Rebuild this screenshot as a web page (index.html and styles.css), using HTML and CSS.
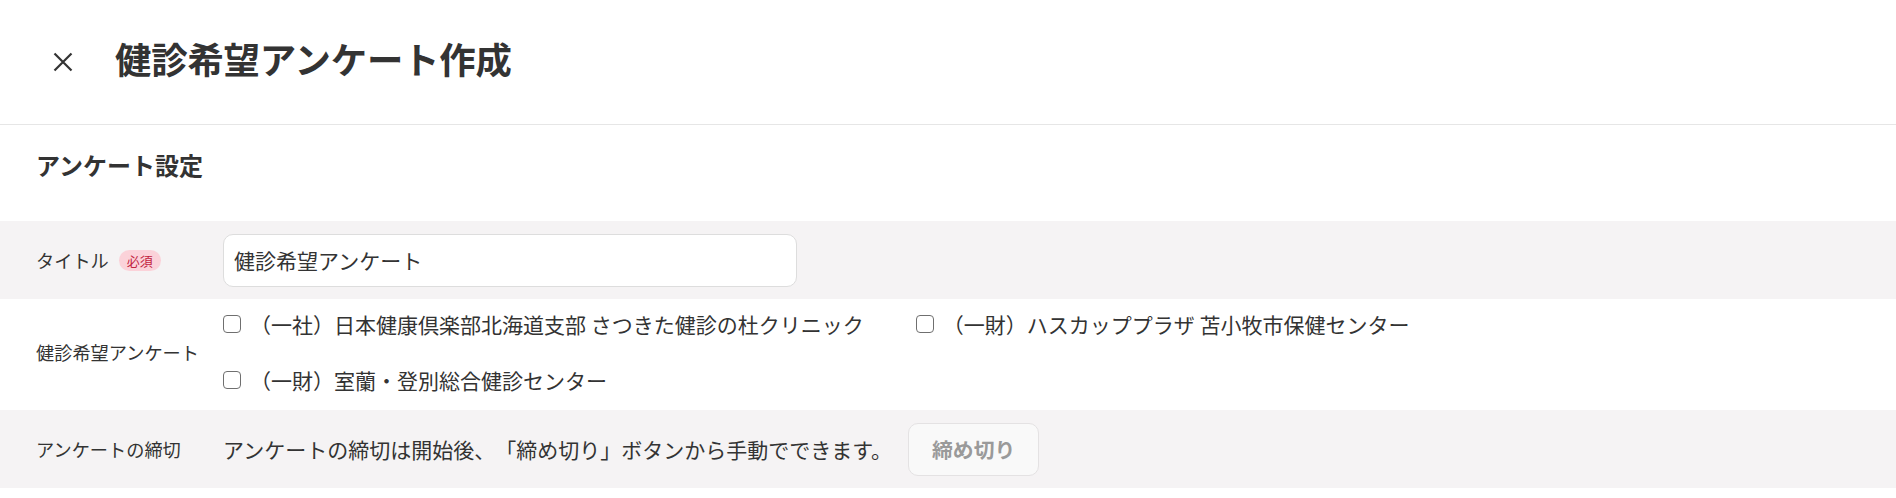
FILE: index.html
```html
<!DOCTYPE html>
<html lang="ja">
<head>
<meta charset="utf-8">
<title>健診希望アンケート作成</title>
<link rel="stylesheet" href="styles.css">
</head>
<body>
<header class="page-header">
  <button class="close-btn" type="button" aria-label="閉じる">
    <svg viewBox="0 0 20 20" width="20" height="20" aria-hidden="true">
      <path d="M1.5 1.5 L18.5 18.5 M18.5 1.5 L1.5 18.5" stroke="#333" stroke-width="2.2" stroke-linecap="butt" fill="none"/>
    </svg>
  </button>
  <h1 class="page-title">健診希望アンケート作成</h1>
</header>

<section class="settings">
  <h2 class="section-title">アンケート設定</h2>

  <div class="form-row row-gray row-title">
    <div class="row-label">
      <span>タイトル</span>
      <span class="badge">必須</span>
    </div>
    <div class="row-body">
      <input class="text-input" type="text" value="健診希望アンケート">
    </div>
  </div>

  <div class="form-row row-white row-options">
    <div class="row-label"><span>健診希望アンケート</span></div>
    <div class="row-body">
      <div class="options">
        <label class="option"><span class="checkbox"></span><span class="option-text">（一社）日本健康倶楽部北海道支部 さつきた健診の杜クリニック</span></label>
        <label class="option"><span class="checkbox"></span><span class="option-text">（一財）ハスカッププラザ 苫小牧市保健センター</span></label>
        <label class="option"><span class="checkbox"></span><span class="option-text">（一財）室蘭・登別総合健診センター</span></label>
      </div>
    </div>
  </div>

  <div class="form-row row-gray row-deadline">
    <div class="row-label"><span>アンケートの締切</span></div>
    <div class="row-body deadline-body">
      <span class="deadline-text">アンケートの締切は開始後、「締め切り」ボタンから手動でできます。</span>
      <button class="close-survey-btn" type="button" disabled>締め切り</button>
    </div>
  </div>
</section>
</body>
</html>
```

FILE: styles.css
```css
* {
  box-sizing: border-box;
}

html, body {
  margin: 0;
  padding: 0;
  background: #ffffff;
}

body {
  font-family: "Noto Sans CJK JP", "Noto Sans", sans-serif;
  color: #333333;
  width: 1896px;
  min-height: 498px;
  text-spacing-trim: space-all;
}

.page-header {
  height: 125px;
  border-bottom: 1px solid #e6e6e6;
  display: flex;
  align-items: center;
  padding-left: 53px;
}

.close-btn {
  width: 20px;
  height: 20px;
  padding: 0;
  margin: 0;
  border: none;
  background: transparent;
  display: flex;
  align-items: center;
  justify-content: center;
  cursor: pointer;
}

.close-btn svg {
  display: block;
}

.page-title {
  margin: 0 0 8px 42px;
  font-size: 36.4px;
  line-height: 1;
  font-weight: 700;
  color: #333333;
  letter-spacing: -0.2px;
}

.settings {
  display: flex;
  flex-direction: column;
}

.section-title {
  margin: 0;
  height: 96px;
  padding: 22px 0 0 36px;
  font-size: 24px;
  line-height: 35px;
  font-weight: 700;
  color: #333333;
}

.form-row {
  display: grid;
  grid-template-columns: 187px 1fr;
  align-items: center;
  padding: 0 36px;
}

.row-gray {
  background: #f5f3f4;
}

.row-white {
  background: #ffffff;
}

.row-title,
.row-deadline {
  height: 78px;
}

.row-label {
  display: flex;
  align-items: center;
  gap: 10px;
  font-size: 18.2px;
  line-height: 27px;
  color: #333333;
}

.badge {
  display: inline-flex;
  align-items: center;
  justify-content: center;
  height: 21px;
  padding: 0 8px;
  border-radius: 11px;
  background: #fbd2d9;
  color: #c2233f;
  font-size: 13px;
  line-height: 21px;
}

.row-body {
  display: flex;
  align-items: center;
}

.text-input {
  width: 574px;
  height: 53px;
  border: 1px solid #dddddd;
  border-radius: 10px;
  background: #ffffff;
  padding: 0 10px;
  font-family: "Noto Sans CJK JP", "Noto Sans", sans-serif;
  font-size: 21px;
  color: #333333;
  outline: none;
}

.row-options {
  padding-top: 10px;
  padding-bottom: 15px;
}

.options {
  display: grid;
  grid-template-columns: auto auto;
  justify-content: start;
  column-gap: 52px;
  row-gap: 26px;
}

.option {
  display: flex;
  align-items: center;
  gap: 9px;
  height: 30px;
  font-size: 21px;
  line-height: 30px;
  color: #333333;
  cursor: pointer;
}

.checkbox {
  width: 18px;
  height: 18px;
  flex: none;
  border: 1.6px solid #6f6f6f;
  border-radius: 4px;
  background: #ffffff;
}

.option-text {
  white-space: nowrap;
}

.deadline-body {
  gap: 16px;
}

.deadline-text {
  font-size: 21px;
  line-height: 30px;
  color: #333333;
  white-space: nowrap;
}

.close-survey-btn {
  height: 53px;
  padding: 0 23px;
  border: 1px solid #e4e2e3;
  border-radius: 10px;
  background: #f9f9f9;
  font-family: "Noto Sans CJK JP", "Noto Sans", sans-serif;
  font-size: 20.8px;
  font-weight: 700;
  color: #9a9a9a;
}
```
